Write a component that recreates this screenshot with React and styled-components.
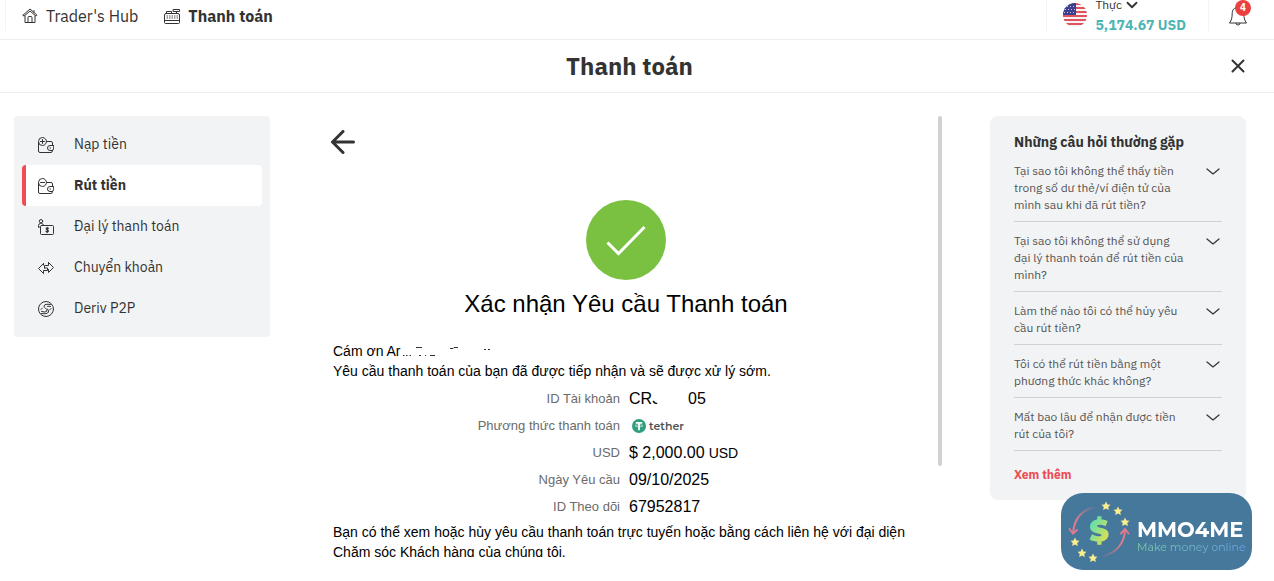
import React from "react";
import styled, { createGlobalStyle } from "styled-components";

const Global = createGlobalStyle`
  *, *::before, *::after { box-sizing: border-box; }
  body { margin: 0; background: #fff; color: #333; font-family: "IBM Plex Sans", "Noto Sans", sans-serif; font-size: 14px; }
  button { font: inherit; color: inherit; background: none; border: 0; padding: 0; cursor: pointer; }
  a { color: inherit; text-decoration: none; }
  h1, h2, p, ul, dl, dd { margin: 0; padding: 0; }
  ul { list-style: none; }
  svg { display: block; flex: none; }
`;

const Page = styled.div`
  min-height: 100vh;
  overflow: hidden;
`;

const Header = styled.header`
  display: flex;
  align-items: flex-end;
  height: 40px;
  border-bottom: 1px solid #eceded;
`;

const HeaderRow = styled.div`
  display: flex;
  flex: 1;
  align-items: center;
  justify-content: space-between;
  height: 48px;
  padding: 0 26px 0 5px;
`;

const HeaderGroup = styled.div`
  display: flex;
  align-items: center;
  height: 32px;
`;

const HeaderNav = styled.nav`
  display: flex;
  align-items: center;
  gap: 26px;
  height: 32px;
  padding-left: 16px;
  border-left: 1px solid #f2f3f4;
`;

const HeaderLink = styled.a`
  display: flex;
  align-items: center;
  gap: 8px;
  padding-top: 2px;
  font-size: 16px;
  line-height: 24px;
  font-weight: ${(p) => (p.$active ? 700 : 400)};
`;

const Account = styled.button`
  display: flex;
  align-items: center;
  gap: 8px;
  height: 32px;
  padding: 0 22px 0 16px;
  border-left: 1px solid #f2f3f4;
  border-right: 1px solid #f2f3f4;
  text-align: left;
`;

const AccountType = styled.span`
  display: flex;
  align-items: center;
  gap: 4px;
  font-size: 12px;
  line-height: 20px;
`;

const Balance = styled.span`
  display: block;
  font-size: 14px;
  font-weight: 700;
  line-height: 20px;
  color: #4bb4b3;
`;

const Bell = styled.button`
  position: relative;
  margin-left: 19px;
`;

const Badge = styled.span`
  position: absolute;
  top: -4px;
  right: -3px;
  width: 16px;
  height: 16px;
  border-radius: 50%;
  background: #ec3f3f;
  color: #fff;
  font-size: 10px;
  font-weight: 700;
  line-height: 16px;
  text-align: center;
`;

const TitleBar = styled.div`
  display: grid;
  grid-template-columns: 1fr auto 1fr;
  align-items: center;
  height: 53px;
  padding: 0 28px 0 13px;
  border-bottom: 1px solid #eceded;
`;

const Title = styled.h1`
  grid-column: 2;
  font-size: 24px;
  line-height: 36px;
  font-weight: 700;
`;

const CloseButton = styled.button`
  justify-self: end;
`;

const Body = styled.div`
  display: flex;
  align-items: flex-start;
  padding: 23px 28px 0 14px;
`;

const Sidebar = styled.nav`
  flex: none;
  width: 256px;
  padding: 8px;
  border-radius: 4px;
  background: #f2f3f4;
`;

const SideLink = styled.a`
  display: flex;
  align-items: center;
  gap: 20px;
  height: 41px;
  padding-left: 12px;
  border-left: 4px solid ${(p) => (p.$active ? "#f04c56" : "transparent")};
  border-radius: 4px;
  background: ${(p) => (p.$active ? "#fff" : "transparent")};
  font-weight: ${(p) => (p.$active ? 700 : 400)};
  font-size: 14px;
  line-height: 20px;
`;

const SideLabel = styled.span`
  padding-bottom: 2px;
`;

const Main = styled.main`
  position: relative;
  flex: 1;
  min-width: 0;
  height: calc(100vh - 140px);
  margin: 0 48px 0 40px;
  overflow: hidden;
`;

const ScrollThumb = styled.div`
  position: absolute;
  top: 0;
  right: 0;
  width: 4px;
  height: 350px;
  border-radius: 4px;
  background: #d1d1d1;
`;

const BackButton = styled.button`
  display: block;
  margin: 14px 0 46px 21px;
`;

const Receipt = styled.section`
  padding: 0 23px;
  color: #000;
  font-family: "Liberation Sans", Arial, sans-serif;
  font-size: 14px;
  line-height: 20px;
`;

const Confirmation = styled.div`
  display: flex;
  flex-direction: column;
  align-items: center;
  gap: 8px;
  margin-bottom: 21px;
`;

const ReceiptTitle = styled.h2`
  font-size: 24px;
  line-height: 32px;
  font-weight: 400;
`;

const NameLine = styled.p`
  display: flex;
  align-items: center;
`;

const Details = styled.dl`
  display: grid;
  grid-template-columns: calc(50% - 6px) 1fr;
  column-gap: 9px;
  grid-auto-rows: 27px;
  align-items: center;
  margin: 4px 0 2px;
`;

const Term = styled.dt`
  color: #6b6b6b;
  font-size: 13px;
  text-align: right;
`;

const Value = styled.dd`
  display: flex;
  align-items: center;
  font-size: 16px;
`;

const Small = styled.span`
  margin-left: 4px;
  font-size: 14px;
`;

const HiddenDigits = styled.span`
  position: relative;
  width: 36px;
  svg { position: absolute; top: -2px; left: 0; }
`;

const Tether = styled.span`
  display: flex;
  align-items: center;
  gap: 3px;
  padding-left: 3px;
  color: #505457;
  font-family: Montserrat, Inter, sans-serif;
  font-size: 11px;
  line-height: 18px;
  font-weight: 600;
`;

const Faq = styled.aside`
  flex: none;
  width: 256px;
  padding: 16px 24px;
  border-radius: 8px;
  background: #f2f3f4;
`;

const FaqTitle = styled.h2`
  font-size: 14px;
  line-height: 20px;
  font-weight: 700;
`;

const FaqItem = styled.li`
  border-bottom: 1px solid #d0d3d6;
`;

const FaqButton = styled.button`
  display: flex;
  align-items: flex-start;
  justify-content: space-between;
  width: 100%;
  padding: 10px 1px 8px 0;
  color: #555;
  font-size: 12px;
  line-height: 17px;
  text-align: left;
  white-space: pre;
`;

const MoreLink = styled.a`
  display: block;
  margin-top: 15px;
  color: #ec4b55;
  font-size: 12px;
  font-weight: 700;
  line-height: 18px;
`;

const Watermark = styled.div`
  position: fixed;
  right: 22px;
  bottom: 11px;
  display: flex;
  align-items: center;
  gap: 5px;
  width: 191px;
  height: 77px;
  padding-left: 6px;
  border-radius: 22px;
  background: #46789c;
`;

const BrandText = styled.div`
  padding-top: 10px;
`;

const BrandName = styled.div`
  color: #fff;
  font-family: Montserrat, Inter, sans-serif;
  font-size: 21px;
  font-weight: 700;
  line-height: 20px;
`;

const BrandLine = styled.div`
  width: max-content;
  background: linear-gradient(90deg, #7ed0a8, #65a5e8);
  background-clip: text;
  -webkit-background-clip: text;
  color: transparent;
  font-family: Montserrat, Inter, sans-serif;
  font-size: 11px;
  line-height: 14px;
`;

const Icon = ({ size = 16, width = 1, children }) => (
  <svg width={size} height={size} viewBox={`0 0 ${size} ${size}`} fill="none" stroke="#333" strokeWidth={width} strokeLinejoin="round" strokeLinecap="round" aria-hidden="true">
    {children}
  </svg>
);

const HomeIcon = () => (
  <Icon>
    <path d="M1 7.200 8 1l7 6.200-1 1L8 3 2 8.200 1 7.200M3 8v6.500h10V8M12 4.500V2.500M6 14.500V9.500q0-1 1-1h2q1 0 1 1v5" />
  </Icon>
);

const RegisterIcon = () => (
  <Icon>
    <path d="M9.500 1.500h6v2h-6zM12.500 3.500v2M2.500 5.500v-2h5v2M2 5.500h12q1.500 0 1.500 1.500v7.500q0 1-1 1h-13q-1 0-1-1V7q0-1.500 1.500-1.500M.5 12.500h15" />
    <path d="M3 8h.5m2 0h.5m2 0h.5m2 0h.5m2 0h.5M3 10h.5m2 0h.5m2 0h.5m2 0h.5m2 0h.5" />
  </Icon>
);

const Wallet = ({ plus }) => (
  <Icon>
    <circle cx="4.500" cy="4.500" r="4" />
    <path d={plus ? "M2.500 4.500h4M4.500 2.500v4" : "M2.500 4.500h4"} />
    <path d="M.5 5v9q0 1.500 1.500 1.500h11q1.500 0 1.500-2M8.500 4.500H13q1.500 0 1.500 1.500v2.500M12 11h.6" />
    <path d="M15.500 8.500h-3.500a2.500 2.500 0 0 0 0 5h2q1.500 0 1.500-1.500z" />
  </Icon>
);

const AgentIcon = () => (
  <Icon>
    <circle cx="3" cy="2.200" r="1.700" />
    <path d="M.5 8V6.500q0-2 2-2h1q1.500 0 2 1.500M.5 8H2M3.500 6.500h11q1 0 1 1v7q0 1-1 1h-11q-1 0-1-1v-7q0-1 1-1" />
    <path strokeWidth="1.200" d="M10.500 9.300q-1.500-.9-2.200 0-.3 1.200 1 1.600t1 1.500q-.8 1-2.300.1M9.200 8.400v5.200" />
  </Icon>
);

const TransferIcon = () => (
  <Icon>
    <path d="M5.500 3.500.5 8.500l5 5v-3h4v-2.500h-3M10.500 2.500l5 5-5 5v-3M10.500 2.500v3h-4V8M5.500 3.500v1.500" />
  </Icon>
);

const P2PIcon = () => (
  <Icon>
    <circle cx="8" cy="8" r="7.500" />
    <path d="M12.500 3.500q-6-1-6.500 1.500 0 1.200 1.500 2.200 2 1.300 1.300 3-1 1.600-5.300.3M3.500 12.500q6 1 7-1.500.5-1.800-1.200-3.200" />
    <path d="M9.500 5.300q1.500-.3 3 .2M3 8.500l1.500-1.500M13 7.500l-1.500 1.500" />
  </Icon>
);

const Chevron = ({ small }) => (
  <svg width={small ? 12 : 16} height={small ? 12 : 16} viewBox="0 0 16 16" fill="none" stroke="#333" strokeWidth={small ? 2.4 : 1.2} strokeLinecap="round" strokeLinejoin="round" aria-hidden="true">
    <path d={small ? "m2 5 6 6 6-6" : "m2 7 6 5 6-5"} />
  </svg>
);

const Flag = () => (
  <svg width="24" height="24" viewBox="0 0 24 24" aria-hidden="true">
    <clipPath id="flag-disc"><circle cx="12" cy="12" r="12" /></clipPath>
    <g clipPath="url(#flag-disc)">
      <path fill="#f7f3f5" d="M0 0h24v24H0z" />
      <path stroke="#e0525c" strokeWidth="2" d="M0 1h24M0 5h24M0 9h24M0 13h24M0 17h24M0 21h24" />
      <path fill="#3b3f8f" d="M0 0h13v12H0z" />
      <path stroke="#c9cbe6" strokeWidth="1" strokeDasharray="1 2" d="M1 3.500h12M2 6.500h11M1 9.500h12" />
    </g>
  </svg>
);

const BellIcon = () => (
  <svg width="20" height="22" viewBox="0 0 20 22" fill="none" stroke="#333" strokeLinejoin="round" aria-hidden="true">
    <path d="M10 3.500C6 3.500 4.200 6 4.200 9.500c0 4-.7 7-2.700 9.500h17c-2-2.500-2.700-5.500-2.700-9.500 0-3.500-1.800-6-5.800-6ZM8 19a2 2 0 0 0 4 0" />
  </svg>
);

const CheckDisc = () => (
  <svg width="80" height="80" viewBox="0 0 80 80" aria-hidden="true">
    <circle cx="40" cy="40" r="40" fill="#7ac142" />
    <path d="M21.500 42.500 32.500 53.500 58.500 27" fill="none" stroke="#fff" strokeWidth="3" />
  </svg>
);

const NameRemnant = () => (
  <svg width="104" height="16" viewBox="0 0 104 16" fill="none" stroke="#333" strokeWidth="1" aria-hidden="true">
    <path d="M2 12.500h1.500M5 12.500h1.500M8.500 12.500h1.500M15 4.500h6M18 12.500h2M24 12.500h1M29 12.500h5M49 5.500h3l1-1h4M83 6.500h2M87 6.500h2" />
  </svg>
);

const TetherIcon = () => (
  <svg width="14" height="14" viewBox="0 0 13 13" aria-hidden="true">
    <circle cx="6.500" cy="6.500" r="6.500" fill="#2f9e7c" />
    <path d="M3.500 3.700h6M6.500 3.700V10.500" stroke="#fff" strokeWidth="1.600" />
    <ellipse cx="6.500" cy="6.300" rx="3.800" ry=".9" fill="none" stroke="#fff" strokeWidth=".5" />
  </svg>
);

const STAR = "M0-4.600 1.400-1.600 4.500-1.300 2.200.9 2.900 4 0 2.400-2.900 4-2.200.9-4.500-1.300-1.400-1.600Z";
const STARS = [[39, 13], [51, 18], [58, 29], [8, 49], [15, 60], [26, 65]];

const BrandMark = () => (
  <svg width="65" height="77" viewBox="0 0 65 77" aria-hidden="true">
    <defs>
      <linearGradient id="coin" x1="0" y1="0" x2="1" y2="1">
        <stop offset=".2" stopColor="#5fe0b0" />
        <stop offset=".85" stopColor="#e6e04a" />
      </linearGradient>
      <linearGradient id="arc-down" x1="1" y1="0" x2="0" y2="1">
        <stop offset="0" stopColor="#e07a8c" stopOpacity="0" />
        <stop offset=".7" stopColor="#e07a8c" />
      </linearGradient>
      <linearGradient id="arc-up" x1="0" y1="1" x2="1" y2="0">
        <stop offset="0" stopColor="#e07a8c" stopOpacity="0" />
        <stop offset=".7" stopColor="#e07a8c" />
      </linearGradient>
    </defs>
    <g fill="none" strokeWidth="2" strokeLinecap="round">
      <path stroke="url(#arc-down)" d="M30 14Q8 17 6 40" />
      <path stroke="#e07a8c" d="m2.500 36 3.500 4.500 4-3.500" />
      <path stroke="url(#arc-up)" d="M34 64Q57 58 58 37" />
      <path stroke="#e07a8c" d="m54 40.500 4-4.500 3.500 4.500" />
    </g>
    <text x="32" y="48" textAnchor="middle" fontFamily="Montserrat, Inter, sans-serif" fontWeight="900" fontSize="30" fill="url(#coin)">$</text>
    {STARS.map(([x, y]) => (
      <path key={x} d={STAR} fill="#fbee8c" transform={`translate(${x} ${y})`} />
    ))}
  </svg>
);

const MENU = [
  ["Nạp tiền", <Wallet plus />],
  ["Rút tiền", <Wallet />],
  ["Đại lý thanh toán", <AgentIcon />],
  ["Chuyển khoản", <TransferIcon />],
  ["Deriv P2P", <P2PIcon />],
];

const QUESTIONS = [
  "Tại sao tôi không thể thấy tiền\ntrong số dư thẻ/ví điện tử của\nmình sau khi đã rút tiền?",
  "Tại sao tôi không thể sử dụng\nđại lý thanh toán để rút tiền của\nmình?",
  "Làm thế nào tôi có thể hủy yêu\ncầu rút tiền?",
  "Tôi có thể rút tiền bằng một\nphương thức khác không?",
  "Mất bao lâu để nhận được tiền\nrút của tôi?",
];

export default function App() {
  return (
    <Page>
      <Global />
      <Header>
        <HeaderRow>
          <HeaderNav>
            <HeaderLink href="#hub"><HomeIcon />Trader's Hub</HeaderLink>
            <HeaderLink href="#cashier" $active><RegisterIcon />Thanh toán</HeaderLink>
          </HeaderNav>
          <HeaderGroup>
            <Account>
              <Flag />
              <span>
                <AccountType>Thực <Chevron small /></AccountType>
                <Balance>5,174.67 USD</Balance>
              </span>
            </Account>
            <Bell aria-label="Thông báo"><BellIcon /><Badge>4</Badge></Bell>
          </HeaderGroup>
        </HeaderRow>
      </Header>
      <TitleBar>
        <Title>Thanh toán</Title>
        <CloseButton aria-label="Đóng">
          <Icon width={2}><path d="M2.500 2.500 13.500 13.500M13.500 2.500 2.500 13.500" /></Icon>
        </CloseButton>
      </TitleBar>
      <Body>
        <Sidebar>
          {MENU.map(([label, icon], i) => (
            <SideLink key={label} href={`#menu-${i}`} $active={i === 1}>{icon}<SideLabel>{label}</SideLabel></SideLink>
          ))}
        </Sidebar>
        <Main>
          <BackButton aria-label="Quay lại">
            <Icon size={24} width={3}><path d="M22.500 12H1.500M12 1.500 1.500 12 12 22.500" /></Icon>
          </BackButton>
          <Receipt>
            <Confirmation>
              <CheckDisc />
              <ReceiptTitle>Xác nhận Yêu cầu Thanh toán</ReceiptTitle>
            </Confirmation>
            <NameLine>Cám ơn Ar<NameRemnant /></NameLine>
            <p>Yêu cầu thanh toán của bạn đã được tiếp nhận và sẽ được xử lý sớm.</p>
            <Details>
              <Term>ID Tài khoản</Term>
              <Value>
                CR
                <HiddenDigits>
                  3
                  <svg width="36" height="20" viewBox="0 0 36 20" aria-hidden="true">
                    <path fill="#fff" d="M0 0H36V20H8Q5 17 4 14L0 13Z" />
                  </svg>
                </HiddenDigits>
                05
              </Value>
              <Term>Phương thức thanh toán</Term>
              <Value><Tether><TetherIcon />tether</Tether></Value>
              <Term>USD</Term>
              <Value>$ 2,000.00 <Small>USD</Small></Value>
              <Term>Ngày Yêu cầu</Term>
              <Value>09/10/2025</Value>
              <Term>ID Theo dõi</Term>
              <Value>67952817</Value>
            </Details>
            <p>Bạn có thể xem hoặc hủy yêu cầu thanh toán trực tuyến hoặc bằng cách liên hệ với đại diện Chăm sóc Khách hàng của chúng tôi.</p>
          </Receipt>
          <ScrollThumb />
        </Main>
        <Faq>
          <FaqTitle>Những câu hỏi thường gặp</FaqTitle>
          <ul>
            {QUESTIONS.map((q) => (
              <FaqItem key={q}><FaqButton><span>{q}</span><Chevron /></FaqButton></FaqItem>
            ))}
          </ul>
          <MoreLink href="#faq">Xem thêm</MoreLink>
        </Faq>
      </Body>
      <Watermark>
        <BrandMark />
        <BrandText>
          <BrandName>MMO4ME</BrandName>
          <BrandLine>Make money online</BrandLine>
        </BrandText>
      </Watermark>
    </Page>
  );
}
